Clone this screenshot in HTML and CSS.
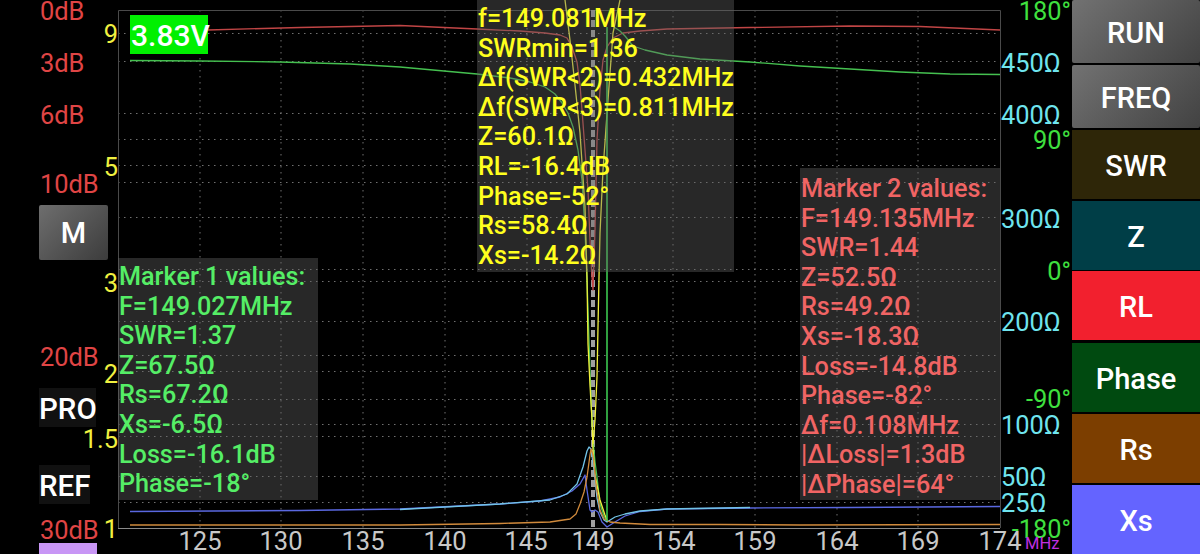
FILE: index.html
```html
<!DOCTYPE html>
<html lang="en">
<head>
<meta charset="utf-8">
<title>Antenna analyzer</title>
<link rel="stylesheet" href="styles.css">
</head>
<body>
<main class="app">
  <aside class="rail">
    <span class="tick db" style="top:11px">0dB</span>
    <span class="tick db" style="top:63px">3dB</span>
    <span class="tick db" style="top:115px">6dB</span>
    <span class="tick db" style="top:184px">10dB</span>
    <span class="tick db" style="top:357px">20dB</span>
    <span class="tick db" style="top:530px">30dB</span>
    <span class="tick swr" style="top:34px">9</span>
    <span class="tick swr" style="top:167px">5</span>
    <span class="tick swr" style="top:283px">3</span>
    <span class="tick swr" style="top:374px">2</span>
    <span class="tick swr" style="top:439px">1.5</span>
    <span class="tick swr" style="top:529px">1</span>
    <div class="tools">
      <button class="btn-m">M</button>
      <div class="tag tag-pro">PRO</div>
      <div class="tag tag-ref">REF</div>
      <div class="swatch"></div>
    </div>
  </aside>

  <section class="plot">
    <svg class="chart" viewBox="118 0 882 554" width="882" height="554" aria-hidden="true">
      <g class="grid">
        <path d="M200 10V528M281 10V528M363 10V528M445 10V528M527 10V528M673 10V528M755 10V528M837 10V528M918 10V528"/>
        <path d="M118 33.5H1000M118 61.5H1000M118 113.5H1000M118 139.5H1000M118 165.5H1000M118 182.5H1000M118 217.5H1000M118 269.5H1000M118 281.5H1000M118 321.5H1000M118 355.5H1000M118 371.5H1000M118 399.5H1000M118 424.5H1000M118 436.5H1000M118 476.5H1000M118 502.5H1000"/>
      </g>
      <path class="frame" d="M118.5 528V10.5H1000.5V528"/>
      <path class="frame-bottom" d="M118 528.5H1000"/>
      <path class="cursor" d="M593 10V528"/>
      <polyline class="t t-rl" points="130,31 208,30 300,27.5 400,25.5 477,29 520,31 545,33 560,35 567,38 572,47 577,62 580,85 582,110 585,150 588,190 590,240 592,277 593,290 595,230 597,140 600,90 603,60 607,47 613,38 623,33 640,31 667,29 750,27.5 850,26 920,26.5 1000,30"/>
      <polyline class="t t-ph" points="130,60.5 200,61 280,62 350,64 400,67 477,74 510,78 530,82 545,87 555,94 562,103 568,113 573,127 578,150 582,180 585,230 587,280 589,340 591,400 593,440 595,462 597,477 600,504 604,516 607,521"/>
      <polyline class="t t-ph" points="614,27 620,31 625,36 633,46 645,50 667,55 700,59 750,62 800,66 850,69 900,72 950,74 1000,74.5"/>
      <polyline class="t t-swr" points="565,0 570,40 575,85 580,133 585,207 587,277 588,344 590,385 592,420 593,450 595,475 600,500 605,515 607,520"/>
      <polyline class="t t-swr" points="620,0 613,33 608,100 603,170 600,233 599,277 597,377 595,420 593,444"/>
      <polyline class="t t-xs" points="130,511.5 300,510.5 400,509 500,504 540,501 560,497 572,491 580,484 585,475 587,490 590,510 592,512 595,510 598,512 602,522 607,527 615,522 625,516 640,511.5 667,509 750,508 850,507.5 1000,506.5"/>
      <polyline class="t t-z" points="400,509.5 500,504 550,500 567,494 577,484 583,467 587,451 589,447 591,449 594,470 597,498 600,512 604,520 607,522 615,517 625,514 640,511 667,509 750,507.5"/>
      <polyline class="t t-rs" points="130,525 400,525 500,523.5 550,522 570,519 576,514 580,504 584,492 587,477 590,455 591,449 593,455 596,485 600,510 604,519 610,522 620,523 650,524.5 720,524.5 800,525 1000,524.5"/>
    </svg>
    <svg class="chart chart-top" viewBox="118 0 882 554" width="882" height="554" aria-hidden="true">
      <path class="marker" d="M607 27V521"/>
    </svg>

    <div class="voltage">3.83V</div>

    <div class="panel panel-min">
      <div>f=149.081MHz</div>
      <div>SWRmin=1.36</div>
      <div>Δf(SWR&lt;2)=0.432MHz</div>
      <div>Δf(SWR&lt;3)=0.811MHz</div>
      <div>Z=60.1Ω</div>
      <div>RL=-16.4dB</div>
      <div>Phase=-52°</div>
      <div>Rs=58.4Ω</div>
      <div>Xs=-14.2Ω</div>
    </div>
    <div class="panel panel-m1">
      <div>Marker 1 values:</div>
      <div>F=149.027MHz</div>
      <div>SWR=1.37</div>
      <div>Z=67.5Ω</div>
      <div>Rs=67.2Ω</div>
      <div>Xs=-6.5Ω</div>
      <div>Loss=-16.1dB</div>
      <div>Phase=-18°</div>
    </div>
    <div class="panel panel-m2">
      <div>Marker 2 values:</div>
      <div>F=149.135MHz</div>
      <div>SWR=1.44</div>
      <div>Z=52.5Ω</div>
      <div>Rs=49.2Ω</div>
      <div>Xs=-18.3Ω</div>
      <div>Loss=-14.8dB</div>
      <div>Phase=-82°</div>
      <div>Δf=0.108MHz</div>
      <div>|ΔLoss|=1.3dB</div>
      <div>|ΔPhase|=64°</div>
    </div>

    <span class="xt" style="left:82px">125</span>
    <span class="xt" style="left:163px">130</span>
    <span class="xt" style="left:245px">135</span>
    <span class="xt" style="left:327px">140</span>
    <span class="xt" style="left:408px">145</span>
    <span class="xt" style="left:475px">149</span>
    <span class="xt" style="left:556px">154</span>
    <span class="xt" style="left:637px">159</span>
    <span class="xt" style="left:719px">164</span>
    <span class="xt" style="left:800px">169</span>
    <span class="xt" style="left:882px">174</span>
  </section>

  <aside class="right-axis">
    <span class="tick deg" style="top:11px">180°</span>
    <span class="tick deg" style="top:140px">90°</span>
    <span class="tick deg" style="top:271px">0°</span>
    <span class="tick deg" style="top:399px">-90°</span>
    <span class="tick deg" style="top:529px">-180°</span>
    <span class="tick ohm" style="top:63px">450Ω</span>
    <span class="tick ohm" style="top:115px">400Ω</span>
    <span class="tick ohm" style="top:219px">300Ω</span>
    <span class="tick ohm" style="top:322px">200Ω</span>
    <span class="tick ohm" style="top:425px">100Ω</span>
    <span class="tick ohm" style="top:477px">50Ω</span>
    <span class="tick ohm" style="top:503px">25Ω</span>
    <span class="unit">MHz</span>
  </aside>

  <nav class="menu">
    <button class="mb mb-grey mb-run">RUN</button>
    <button class="mb mb-grey mb-freq">FREQ</button>
    <button class="mb mb-swr">SWR</button>
    <button class="mb mb-z">Z</button>
    <button class="mb mb-rl">RL</button>
    <button class="mb mb-ph">Phase</button>
    <button class="mb mb-rs">Rs</button>
    <button class="mb mb-xs">Xs</button>
  </nav>
</main>
</body>
</html>
```
FILE: styles.css
```css
* { box-sizing: border-box; }
html, body { margin: 0; height: 100%; background: #000; overflow: hidden; }
body { font-family: Roboto, "Liberation Sans", sans-serif; }

.app {
  display: grid;
  grid-template-columns: 118px 882px 72px 128px;
  width: 1200px;
  height: 554px;
  background: #000;
}

.rail, .plot, .right-axis { position: relative; }

.tick {
  position: absolute;
  font-size: 25.4px;
  line-height: 28px;
  white-space: nowrap;
  transform: translateY(-50%);
}
.db { left: 40px; color: #e04545; }
.swr { right: 0; color: #f0f040; }
.deg { right: 1px; color: #3fe03f; }
.ohm { left: 1px; color: #6fe4ee; }

.tools {
  display: flex;
  flex-direction: column;
  align-items: flex-start;
  height: 554px;
  padding: 205px 0 0 39px;
}
.btn-m {
  width: 69px;
  height: 55px;
  border: 0;
  border-radius: 2px;
  padding: 0;
  background: linear-gradient(135deg, #6e6e6e, #3c3c3c);
  color: #fff;
  font: 500 29px Roboto, sans-serif;
}
.tag {
  height: 39px;
  background: #111;
  color: #fff;
  font-size: 29.5px;
  font-weight: 500;
  line-height: 42px;
}
.tag-pro { width: 57px; margin-top: 128px; }
.tag-ref { width: 51px; margin-top: 38px; }
.swatch { width: 58px; height: 11px; margin-top: 39px; background: #c896f5; }

.chart { position: absolute; left: 0; top: 0; display: block; overflow: visible; }
.chart-top { z-index: 3; }
.grid path { fill: none; stroke: #707070; stroke-width: 1; stroke-dasharray: 1.5 4.5; }
.frame { fill: none; stroke: #4a4a4a; stroke-width: 1; }
.frame-bottom { stroke: #8a8a8a; stroke-width: 1; }
.cursor { stroke: #a0a0a0; stroke-width: 4; stroke-dasharray: 7 3; fill: none; }
.marker { stroke: #3cc850; stroke-width: 1.6; fill: none; }
.t { fill: none; stroke-width: 1.3; stroke-linejoin: round; }
.t-rl { stroke: #c04545; }
.t-ph { stroke: #45c050; }
.t-swr { stroke: #f0f03c; }
.t-z { stroke: #72c4e8; }
.t-xs { stroke: #5a68e0; }
.t-rs { stroke: #d08a3c; }

.voltage {
  position: absolute;
  left: 12px;
  top: 15px;
  z-index: 2;
  width: 78px;
  height: 39px;
  background: #00f000;
  color: #fff;
  font-size: 30px;
  font-weight: 500;
  line-height: 41px;
  padding-left: 1px;
  white-space: nowrap;
}

.panel {
  position: absolute;
  z-index: 4;
  background: rgba(100, 100, 100, 0.4);
  font-size: 25.2px;
  font-weight: 500;
  line-height: 29.6px;
  white-space: nowrap;
}
.panel-min { left: 359px; top: 0; width: 257px; height: 272px; padding: 4px 0 0 1px; color: #ffff1e; }
.panel-m1 { left: 0; top: 258px; width: 200px; height: 242px; padding: 4px 0 0 1px; color: #55ee66; }
.panel-m2 { left: 682px; top: 168px; width: 200px; height: 332px; padding: 6px 0 0 1px; color: #f06464; }

.xt {
  position: absolute;
  top: 528px;
  width: 50px;
  margin-left: -25px;
  text-align: center;
  color: #c8c8c8;
  font-size: 25.5px;
  line-height: 26px;
}

.unit {
  position: absolute;
  left: 25px;
  top: 536px;
  color: #c030e0;
  font-size: 16.5px;
  line-height: 16px;
}

.menu {
  display: flex;
  flex-direction: column;
  height: 554px;
}
.mb {
  border: 0;
  padding: 3px 0 0;
  width: 128px;
  color: #fff;
  font: 500 29px Roboto, sans-serif;
}
.mb-grey { background: linear-gradient(135deg, #727272, #424242); border-radius: 2px; }
.mb-run { height: 63px; }
.mb-freq { height: 63px; margin-top: 2px; }
.mb-swr { height: 69px; margin-top: 2px; background: #2e2608; }
.mb-z { height: 69px; margin-top: 2px; background: #003e47; }
.mb-rl { height: 69px; margin-top: 1px; background: #f2202e; }
.mb-ph { height: 69px; margin-top: 3px; background: #004a10; }
.mb-rs { height: 69px; margin-top: 2px; background: #7c3e00; }
.mb-xs { height: 69px; margin-top: 2px; background: #6464ff; }
```
